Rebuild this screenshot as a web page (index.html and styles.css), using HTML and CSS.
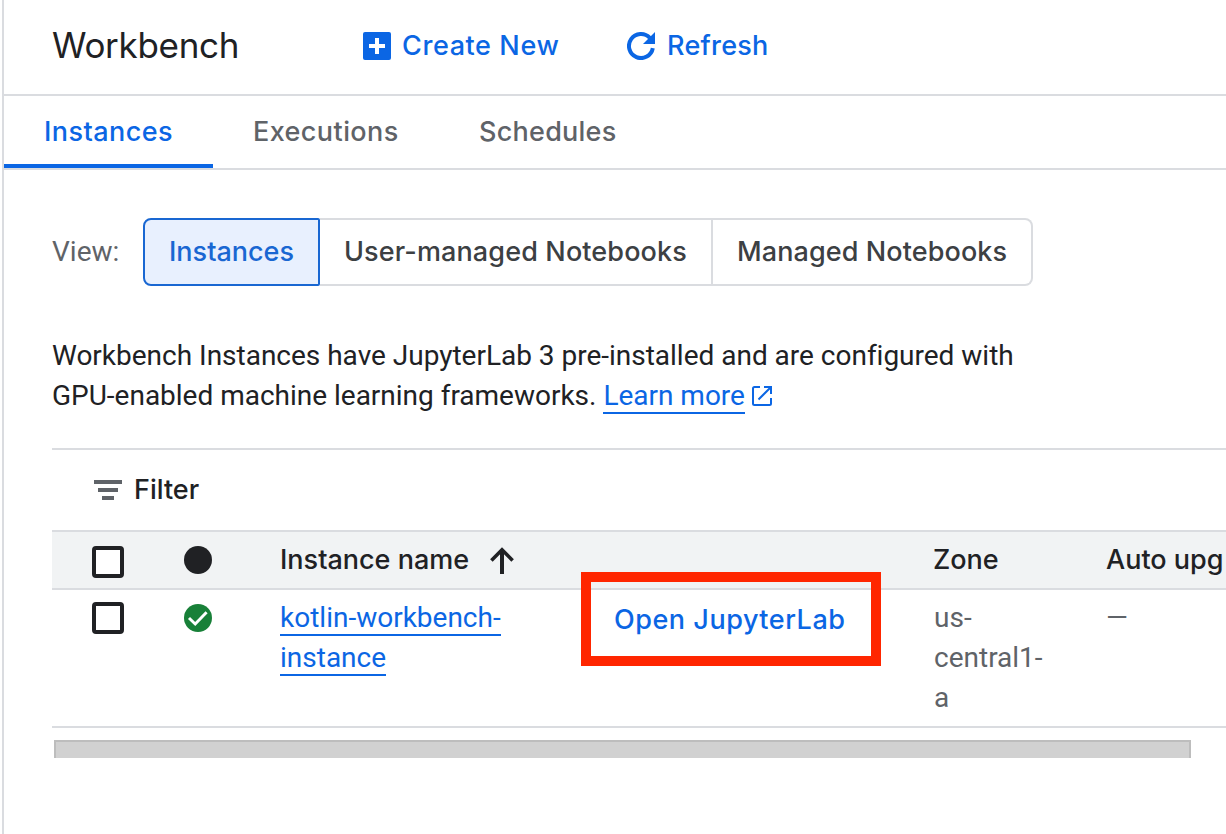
FILE: index.html
```html
<!DOCTYPE html>
<html lang="en">
<head>
<meta charset="utf-8">
<title>Workbench</title>
<link rel="stylesheet" href="styles.css">
</head>
<body>
<div class="page">
  <header class="toolbar">
    <h1 class="title">Workbench</h1>
    <a class="action create">
      <svg class="icon" width="28" height="28" viewBox="0 0 28 28"><rect width="28" height="28" rx="2" fill="#0b66e4"/><path d="M12 6h4v6h6v4h-6v6h-4v-6H6v-4h6z" fill="#fff"/></svg>
      <span>Create New</span>
    </a>
    <a class="action refresh">
      <svg class="icon" width="28" height="28" viewBox="0 0 28 28"><path d="M25.8 16.1A12 12 0 1 1 22.8 5.9" fill="none" stroke="#0b66e4" stroke-width="4"/><path d="M28 0v12H16z" fill="#0b66e4"/></svg>
      <span>Refresh</span>
    </a>
  </header>
  <nav class="tabs">
    <a class="tab tab-active">Instances</a>
    <a class="tab tab-exec">Executions</a>
    <a class="tab tab-sched">Schedules</a>
  </nav>
  <main class="content">
    <div class="view">
      <span class="view-label">View:</span>
      <div class="segments">
        <div class="segment selected">Instances</div>
        <div class="segment user">User-managed Notebooks</div>
        <div class="segment managed">Managed Notebooks</div>
      </div>
    </div>
    <p class="intro">Workbench Instances have JupyterLab 3 pre-installed and are configured with<br>GPU-enabled machine learning frameworks. <a class="link">Learn more</a><svg class="external" width="20" height="20" viewBox="0 0 20 20" fill="none" stroke="#0b66e4" stroke-width="2"><path d="M8 1H2.500Q1 1 1 2.500V17.500Q1 19 2.500 19H17.500Q19 19 19 17.500V12"/><path d="M12 1H19V8M18.500 1.500L6.500 13.500"/></svg></p>
    <section class="list">
      <div class="filter">
        <svg width="28" height="20" viewBox="0 0 28 20" fill="#5f6368"><path d="M0 0h28v4H0zM4 8h20v4H4zM8 16h12v4H8z"/></svg>
        <span>Filter</span>
      </div>
      <div class="row head">
        <div class="cell check"><span class="checkbox"></span></div>
        <div class="cell status"><span class="dot"></span></div>
        <div class="cell name"><span class="name-text">Instance name</span><svg class="arrow" width="24" height="27" viewBox="0 0 24 27" fill="none" stroke="#202124"><path d="M12 27V3" stroke-width="4"/><path d="M1.400 13.400L12 2.800L22.600 13.400" stroke-width="3.600"/></svg></div>
        <div class="cell"></div>
        <div class="cell">Zone</div>
        <div class="cell">Auto upg</div>
      </div>
      <div class="row body">
        <div class="cell check"><span class="checkbox"></span></div>
        <div class="cell status"><svg width="28" height="28" viewBox="0 0 28 28"><circle cx="14" cy="14" r="14" fill="#188038"/><path d="M5 14l6.200 6L22.600 8.200" fill="none" stroke="#fff" stroke-width="2.900"/></svg></div>
        <div class="cell"><a class="link">kotlin-workbench-<br>instance</a></div>
        <div class="cell open"><a class="open-link">Open JupyterLab</a><span class="callout"></span></div>
        <div class="cell muted zone">us-<br>central1-<br>a</div>
        <div class="cell muted">—</div>
      </div>
      <div class="scrollbar"></div>
    </section>
  </main>
</div>
</body>
</html>
```
FILE: styles.css
```css
* { box-sizing: border-box; }
body {
  margin: 0;
  background: #fff;
  color: #202124;
  font: 28px/40px Roboto, sans-serif;
  overflow: hidden;
}
.page {
  height: 834px;
  margin-left: 2px;
  border-left: 2px solid #dadce0;
  overflow: hidden;
}
svg { display: block; flex: none; }
.toolbar {
  display: flex;
  align-items: center;
  height: 96px;
  padding: 0 0 2px 48px;
  border-bottom: 2px solid #dadce0;
}
.title {
  width: 311px;
  margin: 0;
  padding-bottom: 2px;
  font: 400 35px/40px Inter, sans-serif;
  letter-spacing: -0.3px;
}
.action {
  display: flex;
  align-items: center;
  gap: 11px;
  padding-bottom: 1px;
  color: #0b66e4;
  font: 500 27px/40px Inter, sans-serif;
}
.create { width: 264px; letter-spacing: 0.6px; }
.refresh { gap: 12px; letter-spacing: 0.25px; }
.tabs {
  display: flex;
  height: 74px;
  border-bottom: 2px solid #dadce0;
  color: #5f6368;
  font: 500 27px/72px Inter, sans-serif;
}
.tab { padding-left: 40px; white-space: nowrap; }
.tab-active {
  width: 209px;
  border-bottom: 4px solid #0b66e4;
  color: #0b66e4;
  letter-spacing: 0.45px;
}
.tab-exec { width: 226px; letter-spacing: 0.42px; }
.tab-sched { letter-spacing: 0.25px; }
.content { padding-left: 48px; }
.view {
  display: flex;
  align-items: center;
  padding-top: 48px;
}
.view-label { width: 91px; color: #5f6368; }
.segments {
  display: flex;
  height: 68px;
  color: #3c4043;
  font: 500 27px/64px Inter, sans-serif;
  white-space: nowrap;
}
.segment { padding-left: 24px; border: 2px solid #dadce0; border-left: 0; }
.selected {
  width: 177px;
  border: 2px solid #1967d2;
  border-radius: 8px 2px 2px 8px;
  background: #e8f0fe;
  color: #1967d2;
}
.user { width: 393px; letter-spacing: 0.13px; }
.managed { width: 320px; border-radius: 0 8px 8px 0; letter-spacing: 0.1px; }
.intro { margin: 50px 0 32px; white-space: nowrap; letter-spacing: -0.01px; }
.link { color: #0b66e4; border-bottom: 2px solid #0b66e4; }
.external { display: inline-block; margin-left: 7px; vertical-align: -1px; }
.list { border-top: 2px solid #dadce0; }
.filter {
  display: flex;
  align-items: center;
  gap: 12px;
  height: 80px;
  padding-left: 42px;
  font: 500 27px/40px Inter, sans-serif;
}
.row {
  display: grid;
  grid-template-columns: 132px 96px 301px 352px 173px 120px;
  border-bottom: 2px solid #dadce0;
}
.head {
  height: 60px;
  border-top: 2px solid #dadce0;
  background: #f1f3f4;
  font: 500 27px/56px Inter, sans-serif;
  white-space: nowrap;
}
.body { height: 138px; padding-top: 8px; }
.check { padding-left: 40px; }
.checkbox {
  display: block;
  width: 32px;
  height: 32px;
  margin-top: 4px;
  border: 4px solid #202124;
  border-radius: 4px;
  background: #fff;
}
.head .checkbox { margin-top: 14px; }
.status { padding-top: 6px; }
.head .status, .head.row .status { padding-top: 14px; }
.dot { display: block; width: 28px; height: 28px; border-radius: 50%; background: #202124; }
.name { display: flex; }
.name-text { width: 210px; }
.arrow { margin-top: 15px; }
.open { position: relative; padding-left: 33px; }
.open-link {
  display: block;
  padding-top: 2px;
  color: #0b66e4;
  font: 500 27px/40px Inter, sans-serif;
  letter-spacing: 0.53px;
}
.callout {
  position: absolute;
  left: 0;
  top: -26px;
  width: 300px;
  height: 94px;
  border: 10px solid #ff2600;
}
.muted { color: #5f6368; }
.zone { padding-left: 1px; }
.scrollbar {
  width: 1137px;
  height: 18px;
  margin: 12px 0 0 2px;
  border: 2px solid #bdbdbd;
  border-bottom: 0;
  background: #d1d1d1;
}
```
